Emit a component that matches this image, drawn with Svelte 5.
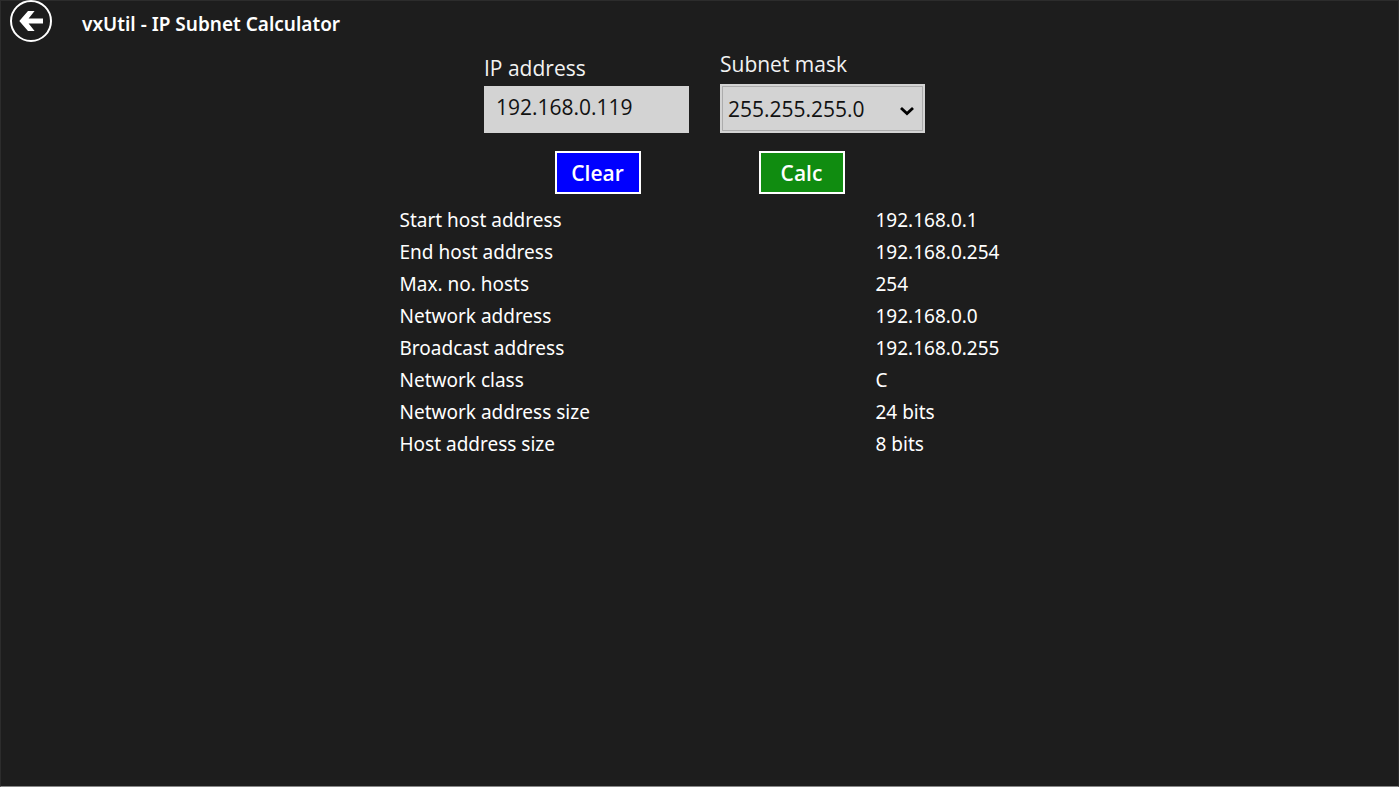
<script>
  const masks = Array.from({ length: 23 }, (_, i) => toText(maskOf(i + 8)));

  let ip = $state('192.168.0.119');
  let mask = $state('255.255.255.0');
  let rows = $state(calculate('192.168.0.119', '255.255.255.0'));

  function maskOf(bits) {
    return (0xffffffff << (32 - bits)) >>> 0;
  }

  function toNumber(text) {
    return text.split('.').reduce((sum, part) => sum * 256 + Number(part), 0) >>> 0;
  }

  function toText(value) {
    return [24, 16, 8, 0].map((shift) => (value >>> shift) & 255).join('.');
  }

  function classOf(value) {
    const first = value >>> 24;
    if (first < 128) return 'A';
    if (first < 192) return 'B';
    if (first < 224) return 'C';
    return first < 240 ? 'D' : 'E';
  }

  function calculate(address, maskText) {
    const host = toNumber(address);
    const net = toNumber(maskText);
    const start = (host & net) >>> 0;
    const end = (start | ~net) >>> 0;
    const bits = net.toString(2).split('1').length - 1;
    return [
      ['Start host address', toText(start + 1)],
      ['End host address', toText(end - 1)],
      ['Max. no. hosts', String(end - start - 1)],
      ['Network address', toText(start)],
      ['Broadcast address', toText(end)],
      ['Network class', classOf(host)],
      ['Network address size', `${bits} bits`],
      ['Host address size', `${32 - bits} bits`]
    ];
  }

  function clear() {
    ip = '';
    rows = rows.map(([name]) => [name, '']);
  }

  function submit(event) {
    event.preventDefault();
    rows = calculate(ip, mask);
  }
</script>

<div class="page">
  <header>
    <button class="back" type="button" aria-label="Back">
      <svg viewBox="0 0 42 42" width="42" height="42" aria-hidden="true">
        <circle cx="21" cy="21" r="20" fill="none" stroke="#fff" stroke-width="2" />
        <path d="M9.3 21 L18 11 H24.6 L18.6 18.6 H33 V23.6 H18.6 L24.6 31 H18 Z" fill="#fff" />
      </svg>
    </button>
    <h1>vxUtil - IP Subnet Calculator</h1>
  </header>

  <main>
    <form onsubmit={submit}>
      <div class="fields">
        <div class="field">
          <label for="ip">IP address</label>
          <input id="ip" type="text" bind:value={ip} />
        </div>
        <div class="field mask">
          <label for="mask">Subnet mask</label>
          <div class="select">
            <select id="mask" bind:value={mask}>
              {#each masks as option}
                <option value={option}>{option}</option>
              {/each}
            </select>
            <svg viewBox="0 0 14 10" width="14" height="10" aria-hidden="true">
              <path d="M1 2 L7 7.5 L13 2" fill="none" stroke="#000" stroke-width="2.8" />
            </svg>
          </div>
        </div>
      </div>
      <div class="actions">
        <button class="clear" type="button" onclick={clear}>Clear</button>
        <button class="calc" type="submit">Calc</button>
      </div>
    </form>

    <table>
      <tbody>
        {#each rows as [name, value]}
          <tr>
            <th scope="row">{name}</th>
            <td>{value}</td>
          </tr>
        {/each}
      </tbody>
    </table>
  </main>
</div>

<style>
  :global(body) {
    margin: 0;
    background: #1d1d1d;
  }

  .page {
    box-sizing: border-box;
    min-height: 100vh;
    border: 1px solid #2c2c2c;
    border-top-width: 0;
    border-bottom-color: #888;
    background: #1d1d1d;
    color: #fff;
    font-family: 'Noto Sans', 'Open Sans', sans-serif;
  }

  header {
    display: flex;
    align-items: center;
    gap: 30px;
    height: 48px;
    padding-left: 9px;
    box-shadow: inset 0 1px #2c2c2c;
  }

  .back {
    align-self: flex-start;
    height: 42px;
    padding: 0;
    border: 0;
    background: none;
  }

  .back svg {
    display: block;
  }

  h1 {
    margin: 0;
    font-size: 19px;
    font-weight: 600;
    line-height: 28px;
  }

  form {
    font-family: 'Open Sans', 'Noto Sans', sans-serif;
  }

  .fields {
    display: flex;
    justify-content: center;
    align-items: flex-end;
    gap: 31px;
    height: 85px;
    padding-left: 10px;
  }

  .field {
    display: flex;
    flex-direction: column;
    gap: 2px;
    width: 205px;
    font-size: 21px;
    line-height: 32px;
  }

  .mask {
    gap: 4px;
  }

  label {
    color: #f2f2f2;
  }

  input,
  select {
    box-sizing: border-box;
    width: 100%;
    border: 0;
    border-radius: 0;
    background: #d3d3d3;
    color: #111;
    font: inherit;
  }

  input {
    height: 47px;
    padding: 0 12px 5px;
  }

  .select {
    position: relative;
    height: 49px;
    box-sizing: border-box;
    padding: 2px;
    background: #d3d3d3;
  }

  select {
    display: block;
    height: 45px;
    padding: 0 5px;
    border: 1px solid #acacac;
    appearance: none;
  }

  .select svg {
    position: absolute;
    top: 22px;
    right: 11px;
    pointer-events: none;
  }

  .actions {
    display: flex;
    justify-content: center;
    gap: 118px;
    padding-top: 18px;
  }

  .actions button {
    width: 86px;
    height: 43px;
    padding: 0;
    border: 2px solid #fff;
    color: #fff;
    font-family: inherit;
    font-size: 21px;
    font-weight: 600;
  }

  .clear {
    background: #0000ff;
  }

  .calc {
    background: #108c10;
  }

  table {
    width: 600px;
    max-width: 100%;
    margin: 10px auto 0;
    border-collapse: collapse;
    table-layout: fixed;
    font-size: 19px;
    line-height: 32px;
  }

  th,
  td {
    padding: 0;
    font-weight: 400;
    text-align: left;
    white-space: nowrap;
  }

  th {
    width: 476px;
  }
</style>
